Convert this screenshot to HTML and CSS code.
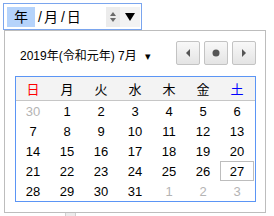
FILE: index.html
```html
<!DOCTYPE html>
<html lang="ja">
<head>
    <meta charset="UTF-8">
    <title>日付の選択</title>
    <link rel="stylesheet" href="styles.css">
</head>
<body>
    <div class="date-field">
        <span class="seg seg-active">年</span><span class="sep">/</span><span class="seg">月</span><span class="sep">/</span><span class="seg">日</span>
        <span class="spin">
            <svg width="8" height="14" viewBox="0 0 8 14"><path d="M4 2 L7 6 L1 6 Z" fill="#6b6b6b"/><path d="M1 8 L7 8 L4 12 Z" fill="#6b6b6b"/></svg>
        </span>
        <span class="drop">
            <svg width="10" height="8" viewBox="0 0 10 8"><path d="M0 0 L10 0 L5 8 Z" fill="#000"/></svg>
        </span>
    </div>

    <div class="picker">
        <div class="picker-head">
            <div class="month-label">2019年(令和元年) 7月 <span class="caret">&#9662;</span></div>
            <div class="nav">
                <button class="nav-btn"><svg width="6" height="8" viewBox="0 0 6 8"><path d="M5 0 L5 8 L1 4 Z" fill="#555"/></svg></button>
                <button class="nav-btn"><svg width="8" height="8" viewBox="0 0 8 8"><circle cx="4" cy="4" r="3.5" fill="#555"/></svg></button>
                <button class="nav-btn"><svg width="6" height="8" viewBox="0 0 6 8"><path d="M1 0 L1 8 L5 4 Z" fill="#555"/></svg></button>
            </div>
        </div>

        <div class="calendar">
            <div class="week-head">
                <span class="sun">日</span><span>月</span><span>火</span><span>水</span><span>木</span><span>金</span><span class="sat">土</span>
            </div>
            <div class="days">
                <span class="other">30</span><span>1</span><span>2</span><span>3</span><span>4</span><span>5</span><span>6</span>
                <span>7</span><span>8</span><span>9</span><span>10</span><span>11</span><span>12</span><span>13</span>
                <span>14</span><span>15</span><span>16</span><span>17</span><span>18</span><span>19</span><span>20</span>
                <span>21</span><span>22</span><span>23</span><span>24</span><span>25</span><span>26</span><span class="today">27</span>
                <span>28</span><span>29</span><span>30</span><span>31</span><span class="other">1</span><span class="other">2</span><span class="other">3</span>
            </div>
        </div>
    </div>
    <div class="behind"></div>
</body>
</html>
```

FILE: styles.css
```css
* {
    box-sizing: border-box;
}
body {
    margin: 0;
    background: #fff;
    font-family: "Liberation Sans", "Noto Sans CJK JP", sans-serif;
    font-size: 13px;
    color: #000;
}
.date-field {
    margin: 3px 0 0 3px;
    width: 139px;
    height: 27px;
    border: 1px solid #7aa5ee;
    display: flex;
    align-items: center;
    padding-left: 3px;
    font-size: 14px;
}
.seg {
    display: inline-block;
    line-height: 20px;
}
.seg-active {
    background: #b5d3fb;
    width: 28px;
    text-align: center;
}
.sep {
    padding: 0 2px 0 3px;
}
.spin {
    margin-left: auto;
    width: 14px;
    height: 20px;
    background: #ececec;
    display: flex;
    align-items: center;
    justify-content: center;
}
.drop {
    width: 20px;
    height: 20px;
    background: #f3f3f3;
    display: flex;
    align-items: center;
    justify-content: center;
    margin-right: 1px;
}
.picker {
    margin-left: 4px;
    width: 262px;
    height: 183px;
    border: 1px solid #bdbdbd;
    padding: 10px 9px 0 10px;
    background: #fff;
}
.picker-head {
    display: flex;
    align-items: center;
    justify-content: space-between;
    height: 24px;
    margin-bottom: 11px;
}
.month-label {
    padding-left: 5px;
    font-size: 12px;
    padding-top: 3px;
}
.caret {
    font-size: 11px;
    margin-left: 5px;
}
.nav {
    display: flex;
    gap: 4px;
}
.nav-btn {
    width: 24px;
    height: 24px;
    padding: 0;
    border: 1px solid #c3c3c3;
    border-radius: 2px;
    background: linear-gradient(#f8f8f8, #e4e4e4);
    display: flex;
    align-items: center;
    justify-content: center;
}
.calendar {
    border: 1px solid #5b95f5;
}
.week-head, .days {
    display: grid;
    grid-template-columns: repeat(7, 34px);
}
.week-head {
    background: #f3f3f3;
    border-bottom: 1px solid #c6c6c6;
    height: 24px;
}
.week-head span, .days span {
    display: flex;
    align-items: center;
    justify-content: center;
}
.sun {
    color: #f00;
}
.sat {
    color: #00f;
}
.days span {
    height: 20px;
}
.days .other {
    color: #b4b4b4;
}
.days .today {
    border: 1px solid #bdbdbd;
}
.behind {
    margin-left: 65px;
    width: 11px;
    height: 6px;
    background: #ececec;
    border: 1px solid #d0d0d0;
    border-top: none;
}
```
